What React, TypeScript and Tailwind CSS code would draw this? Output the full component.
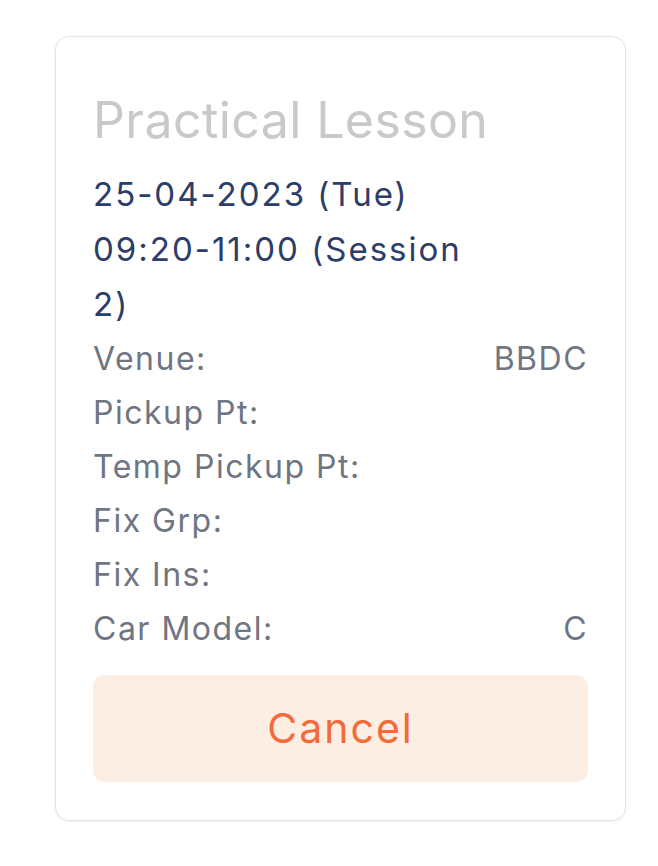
const rows: [string, string][] = [
  ["Venue:", "BBDC"],
  ["Pickup Pt:", ""],
  ["Temp Pickup Pt:", ""],
  ["Fix Grp:", ""],
  ["Fix Ins:", ""],
  ["Car Model:", "C"],
]

const App = () => {
  return (
    <div className="min-h-screen bg-white pt-[36px] pl-[55px] font-['Inter',sans-serif]">
      <div className="w-[571px] rounded-[14px] border border-[#e4e4e4] bg-white px-[37px] pt-[53px] pb-[38px] shadow-[0_1px_3px_rgba(0,0,0,0.06)]">
        <h2 className="text-[50px] leading-[60px] font-normal tracking-[0.4px] text-[#c9c9c9]">Practical Lesson</h2>

        {/* Date / time */}
        <div className="mt-[17px] flex">
          <div className="w-[375px] text-[33px] leading-[55px] tracking-[2px] text-[#2b3d68]">
            <div>25-04-2023 (Tue)</div>
            <div>09:20-11:00 (Session 2)</div>
          </div>
        </div>

        <div className="text-[32px] leading-[54px] tracking-[1.5px] text-[#6f7582]">
          {rows.map(([label, value]) => (
            <div key={label} className="flex justify-between">
              <span>{label}</span>
              <span>{value}</span>
            </div>
          ))}
        </div>

        <button className="mt-[19px] h-[107px] w-full rounded-[12px] bg-[#fdeee3] text-[41px] tracking-[2px] text-[#f26b38]">
          Cancel
        </button>
      </div>
    </div>
  )
}

export default App
